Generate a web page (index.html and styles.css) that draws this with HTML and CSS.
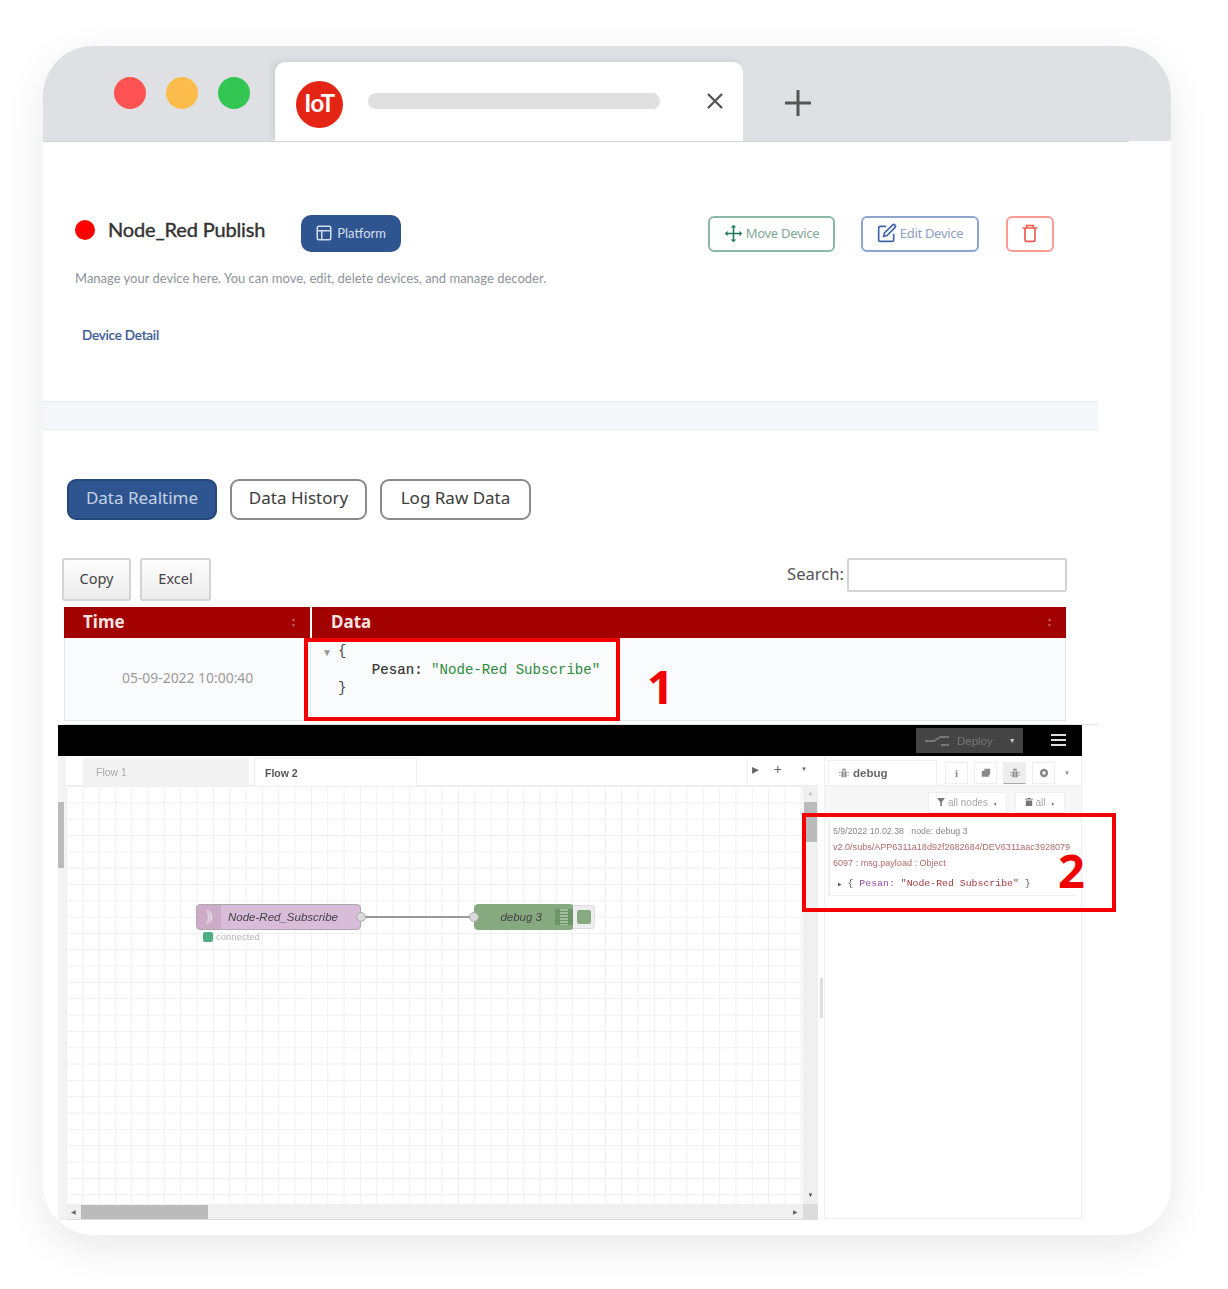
FILE: index.html
```html
<!DOCTYPE html>
<html lang="id">
<head>
  <meta charset="UTF-8" />
  <meta name="viewport" content="width=device-width, initial-scale=1.0"/>
  <title>Node_Red Publish</title>
  <link rel="stylesheet" href="styles.css">
</head>
<body>
  <div class="window">
    <div class="tabbar">
      <div class="dots">
        <span class="dot dot-red"></span>
        <span class="dot dot-yellow"></span>
        <span class="dot dot-green"></span>
      </div>
      <div class="tab">
        <div class="logo">IoT</div>
        <div class="address"></div>
        <svg class="tab-close" viewBox="0 0 16 16"><path d="M1 1l14 14M15 1L1 15"/></svg>
      </div>
      <svg class="tab-new" viewBox="0 0 26 26"><path d="M13 1v24M1 13h24"/></svg>
    </div>

    <div class="device-head">
      <span class="status-dot"></span>
      <h1>Node_Red Publish</h1>
      <button class="btn-platform">
        <svg viewBox="0 0 24 24"><rect x="3" y="3" width="18" height="18" rx="2"/><path d="M3 9h18M9 9v12"/></svg>
        Platform
      </button>
      <div class="head-actions">
        <button class="btn-line btn-move">
          <svg viewBox="0 0 24 24"><path d="M12 1l3.500 3.500H13V11h6.500V8.500L23 12l-3.500 3.500V13H13v6.500h2.500L12 23l-3.500-3.500H11V13H4.500v2.500L1 12l3.500-3.500V11H11V4.500H8.500z"/></svg>
          Move Device
        </button>
        <button class="btn-line btn-edit">
          <svg viewBox="0 0 24 24"><path d="M11 4H4a2 2 0 0 0-2 2v14a2 2 0 0 0 2 2h14a2 2 0 0 0 2-2v-7"/><path d="M18.500 2.500a2.121 2.121 0 0 1 3 3L12 15l-4 1 1-4z"/></svg>
          Edit Device
        </button>
        <button class="btn-line btn-trash">
          <svg viewBox="0 0 24 24"><path d="M3 6h18M8 6V3h8v3M6 6v14a2 2 0 0 0 2 2h8a2 2 0 0 0 2-2V6"/></svg>
        </button>
      </div>
    </div>
    <p class="device-sub">Manage your device here. You can move, edit, delete devices, and manage decoder.</p>
    <a class="device-link">Device Detail</a>
    <div class="strip"></div>

    <div class="data-tabs">
      <button class="data-tab active">Data Realtime</button>
      <button class="data-tab">Data History</button>
      <button class="data-tab">Log Raw Data</button>
    </div>

    <div class="table-tools">
      <button class="tool-btn tool-copy">Copy</button>
      <button class="tool-btn tool-excel">Excel</button>
      <label class="search">Search: <span class="search-input"></span></label>
    </div>

    <div class="table">
      <div class="th th-time">Time <span class="sort">&#9650;<br>&#9660;</span></div>
      <div class="th th-data">Data <span class="sort">&#9650;<br>&#9660;</span></div>
      <div class="td td-time">05-09-2022 10:00:40</div>
      <div class="td td-data">
        <span class="json-caret">&#9660;</span>
        <pre class="json">{
    <b>Pesan:</b> <i>"Node-Red Subscribe"</i>
}</pre>
      </div>
    </div>
    <div class="table-rule"></div>

    <div class="nodered">
      <div class="nr-top">
        <div class="nr-deploy">
          <svg viewBox="0 0 24 12"><path d="M0 6h9l6-4M15 2h9M16 10h8"/></svg>
          <span>Deploy</span>
          <span class="nr-deploy-caret">&#9660;</span>
        </div>
        <div class="nr-burger"><span></span><span></span><span></span></div>
      </div>
      <div class="nr-main">
        <div class="nr-left-scroll"><span></span></div>
        <div class="nr-work">
          <div class="nr-tabs">
            <span class="nr-tab">Flow 1</span>
            <span class="nr-tab nr-tab-on">Flow 2</span>
            <div class="nr-tab-tools">
              <span class="nr-tool">&#9656;</span>
              <span class="nr-tool">+</span>
              <span class="nr-tool nr-tool-small">&#9660;</span>
            </div>
          </div>
          <div class="nr-canvas-row">
            <div class="nr-canvas">
              <div class="wire"></div>
              <div class="node node-sub">
                <span class="node-icon">
                  <svg viewBox="0 0 12 22"><path d="M3 2c3 5 3 13 0 18M6 3c2 5 2 11 0 16M8.500 6c1 3 1 7 0 10"/></svg>
                </span>
                <span class="node-label">Node-Red_Subscribe</span>
                <span class="port port-out"></span>
              </div>
              <div class="node-status"><span></span>connected</div>
              <div class="node node-debug">
                <span class="port port-in"></span>
                <span class="node-label">debug 3</span>
                <span class="node-lines"></span>
              </div>
              <div class="node-toggle"><span></span></div>
            </div>
            <div class="nr-vscroll">
              <span class="up">&#9650;</span>
              <span class="thumb"></span>
              <span class="down">&#9660;</span>
            </div>
          </div>
          <div class="nr-hscroll">
            <span class="left">&#9664;</span>
            <span class="thumb"></span>
            <span class="right">&#9654;</span>
            <span class="corner"></span>
          </div>
        </div>
        <div class="nr-sep"><span></span></div>
        <div class="nr-side">
          <div class="side-tabs">
            <span class="side-tab">
              <svg viewBox="0 0 12 12"><path d="M4 1h4v2H4zM3 4h2.500v7H3zM6.500 4H9v7H6.500zM0 5h2v1H0zM10 5h2v1h-2zM0 8h2v1H0zM10 8h2v1h-2z"/></svg>
              debug
            </span>
            <span class="side-btn">i</span>
            <span class="side-btn"><svg viewBox="0 0 12 12"><path d="M4 1h7v7H9.500v2.500H1v-7h3z"/></svg></span>
            <span class="side-btn side-btn-on"><svg viewBox="0 0 12 12"><path d="M4 1h4v2H4zM3 4h2.500v7H3zM6.500 4H9v7H6.500zM0 5h2v1H0zM10 5h2v1h-2zM0 8h2v1H0zM10 8h2v1h-2z"/></svg></span>
            <span class="side-btn"><svg viewBox="0 0 12 12"><path fill-rule="evenodd" d="M6 1a5 5 0 1 0 0 10A5 5 0 0 0 6 1zm0 3a2 2 0 1 1 0 4 2 2 0 0 1 0-4z"/></svg></span>
            <span class="side-caret">&#9660;</span>
          </div>
          <div class="side-filter">
            <span class="filter-btn filter-nodes"><svg viewBox="0 0 10 10"><path d="M0 0h10L6 5v5H4V5z"/></svg> all nodes <small>&#9660;</small></span>
            <span class="filter-btn filter-all"><svg viewBox="0 0 10 10"><path d="M3 0h4v1h3v1H0V1h3zM1 3h8v7H1z"/></svg> all <small>&#9660;</small></span>
          </div>
          <div class="debug-msg">
            <div class="debug-meta">5/9/2022 10.02.38 &nbsp; node: debug 3</div>
            <div class="debug-topic">v2.0/subs/APP6311a18d92f2682684/DEV6311aac3928079<br>6097 : msg.payload : Object</div>
            <div class="debug-json"><small>&#9654;</small> { <b>Pesan:</b> <i>"Node-Red Subscribe"</i> }</div>
          </div>
        </div>
      </div>
    </div>

    <div class="mark mark-one"></div>
    <div class="mark-num mark-num-one">1</div>
    <div class="mark mark-two"></div>
    <div class="mark-num mark-num-two">2</div>
  </div>
</body>
</html>
```

FILE: styles.css
```css
* {
  box-sizing: border-box;
}

body {
  margin: 0;
  background-color: #fff;
  font-family: 'Lato', sans-serif;
  color: #333;
}

button {
  font-family: inherit;
  padding: 0;
  cursor: pointer;
}

/* window + browser chrome */
.window {
  position: relative;
  width: 1128px;
  height: 1189px;
  margin: 46px 0 54px 43px;
  background-color: #fff;
  border-radius: 50px;
  box-shadow: 0 12px 40px rgba(0,0,0,0.09);
  overflow: hidden;
}

.tabbar {
  display: flex;
  height: 95px;
  background-color: #dee0e4;
  position: relative;
}

.tabbar::after {
  content: '';
  position: absolute;
  left: 0;
  right: 42px;
  bottom: -1px;
  height: 1px;
  background-color: #d2d4d7;
  z-index: 2;
}

.dots {
  display: flex;
  gap: 20px;
  padding: 31px 0 0 71px;
}

.dot {
  width: 32px;
  height: 32px;
  border-radius: 50%;
}

.dot-red { background-color: #ff5252; }
.dot-yellow { background-color: #fbbc4b; }
.dot-green { background-color: #33c653; }

.tab {
  display: flex;
  align-items: flex-start;
  width: 468px;
  height: 79px;
  margin: 16px 0 0 25px;
  background-color: #fff;
  border-radius: 10px 10px 0 0;
  box-shadow: -3px -2px 6px rgba(0,0,0,0.07);
  position: relative;
  z-index: 1;
}

.logo {
  width: 47px;
  height: 47px;
  margin: 19px 0 0 21px;
  border-radius: 50%;
  background-color: #e42515;
  color: #fff;
  font-size: 24px;
  font-weight: 700;
  letter-spacing: -0.5px;
  line-height: 43px;
  text-align: center;
}

.address {
  width: 292px;
  height: 16px;
  margin: 31px 0 0 25px;
  background-color: #e0e0e0;
  border-radius: 8px;
}

.tab-close {
  width: 16px;
  height: 16px;
  margin: 31px 0 0 47px;
  fill: none;
  stroke: #555;
  stroke-width: 2.400;
}

.tab-new {
  width: 26px;
  height: 26px;
  margin: 44px 0 0 42px;
  fill: none;
  stroke: #555;
  stroke-width: 3;
  stroke-linecap: round;
}

/* device header */
.device-head {
  display: flex;
  align-items: flex-start;
  padding: 74px 117px 0 32px;
}

.status-dot {
  width: 20px;
  height: 20px;
  margin-top: 5px;
  border-radius: 50%;
  background-color: #f00;
}

h1 {
  margin: -1px 0 0 13px;
  font-size: 20px;
  font-weight: 400;
  line-height: 30px;
  letter-spacing: -0.15px;
  -webkit-text-stroke: 0.4px #333;
  color: #333;
}

.btn-platform {
  display: flex;
  align-items: center;
  gap: 4px;
  width: 100px;
  height: 37px;
  margin-left: 36px;
  padding: 0 0 2px 14px;
  background-color: #2f5591;
  border: none;
  border-radius: 10px;
  color: #d5deec;
  font-size: 13px;
}

.btn-platform svg {
  width: 18px;
  height: 18px;
  fill: none;
  stroke: #d5deec;
  stroke-width: 2;
}

.head-actions {
  display: flex;
  gap: 26px;
  margin-left: auto;
}

.btn-line {
  display: flex;
  align-items: center;
  justify-content: center;
  gap: 3px;
  height: 36px;
  margin-top: 1px;
  padding-bottom: 2px;
  background-color: #fff;
  border: 2px solid;
  border-radius: 6px;
  font-family: 'Noto Sans', sans-serif;
  font-size: 13px;
  letter-spacing: -0.3px;
}

.btn-line svg {
  fill: none;
  stroke-width: 2;
}

.btn-move {
  width: 127px;
  border-color: #8bb8a5;
  color: #7fa896;
}

.btn-move svg {
  width: 19px;
  height: 19px;
  fill: #1f7a5a;
  stroke: none;
}

.btn-edit {
  width: 118px;
  border-color: #8ea6cf;
  color: #8ea0c2;
}

.btn-edit svg {
  width: 20px;
  height: 20px;
  stroke: #3f66a8;
}

.btn-trash {
  width: 48px;
  margin-left: 1px;
  border-color: #fb9c94;
}

.btn-trash svg {
  width: 20px;
  height: 20px;
  stroke: #ef5a50;
}

.device-sub {
  margin: 18px 0 0 32px;
  font-size: 13px;
  line-height: 16px;
  color: #8e939b;
}

.device-link {
  display: block;
  margin: 41px 0 0 39px;
  font-size: 13.500px;
  font-weight: 500;
  line-height: 16px;
  letter-spacing: -0.22px;
  -webkit-text-stroke: 0.2px #3d5b96;
  color: #3d5b96;
}

.strip {
  width: 1055px;
  height: 29px;
  margin-top: 58px;
  background-color: #f5f7fa;
  border-top: 1px solid #e9ebef;
  border-bottom: 1px solid #e9ebef;
}

/* realtime / history tabs */
.data-tabs {
  display: flex;
  gap: 13px;
  margin-top: 49px;
  padding-left: 24px;
}

.data-tab {
  width: 137px;
  height: 41px;
  padding-bottom: 4px;
  background-color: #fff;
  border: 2px solid #8a8a8a;
  border-radius: 9px;
  font-family: 'Noto Sans', sans-serif;
  font-size: 17px;
  color: #3b3b3b;
}

.data-tab:last-child {
  width: 151px;
}

.data-tab.active {
  width: 150px;
  background-color: #2f5591;
  border-color: #27477a;
  color: #c5d2e6;
}

/* copy / excel / search */
.table-tools {
  display: flex;
  align-items: flex-start;
  gap: 9px;
  margin-top: 38px;
  padding-left: 19px;
  width: 1024px;
}

.tool-btn {
  height: 43px;
  padding-bottom: 4px;
  background: linear-gradient(to bottom, #fdfdfd, #ececec);
  border: 2px solid #d4d4d4;
  border-radius: 3px;
  font-family: 'Noto Sans', sans-serif;
  font-size: 14.500px;
  color: #444;
}

.tool-copy { width: 69px; }
.tool-excel { width: 71px; }

.search {
  display: flex;
  gap: 3px;
  margin-left: auto;
  font-family: 'Noto Sans', sans-serif;
  font-size: 16.600px;
  line-height: 32px;
  color: #555;
}

.search-input {
  width: 220px;
  height: 34px;
  background-color: #fff;
  border: 2px solid #d4d4d4;
  border-radius: 2px;
}

/* data table */
.table {
  display: grid;
  grid-template-columns: 246px 756px;
  grid-template-rows: 31px 83px;
  width: 1002px;
  margin: 6px 0 0 21px;
}

.th {
  display: flex;
  align-items: center;
  justify-content: space-between;
  padding: 0 14px 2px 19px;
  background-color: #a30000;
  color: #f3e3e3;
  font-family: 'Noto Sans', sans-serif;
  font-size: 17px;
  font-weight: 700;
}

.th-data {
  border-left: 2px solid #fff;
}

.sort {
  font-size: 5px;
  line-height: 6px;
  color: #c26a6a;
}

.td {
  background-color: #fafbfc;
  border-bottom: 1px solid #e3e7ef;
}

.td-time {
  padding: 30px 0 0 57px;
  border-left: 1px solid #e3e7ef;
  font-family: 'Noto Sans', sans-serif;
  font-size: 13.900px;
  color: #9a9a9a;
}

.td-data {
  position: relative;
  padding: 4px 0 0 27px;
  border-left: 1px solid #e3e7ef;
  border-right: 1px solid #e3e7ef;
}

.json-caret {
  position: absolute;
  left: 11px;
  top: 8px;
  font-size: 10px;
  color: #999;
}

.json {
  margin: 0;
  font-family: 'Liberation Mono', monospace;
  font-size: 14.100px;
  line-height: 18.500px;
  color: #444;
}

.json b {
  font-weight: 400;
  color: #333;
  -webkit-text-stroke: 0.2px #333;
}

.json i {
  font-style: normal;
  color: #2e8b3d;
}

.table-rule {
  width: 1034px;
  height: 1px;
  margin: 3px 0 0 21px;
  background-color: #e4e4e4;
}

/* node-red screenshot */
.nodered {
  display: flex;
  flex-direction: column;
  width: 1024px;
  height: 495px;
  margin-left: 15px;
  font-family: 'Liberation Sans', sans-serif;
  filter: blur(0.4px);
}

.nr-top {
  display: flex;
  justify-content: flex-end;
  align-items: center;
  gap: 28px;
  height: 31px;
  padding-right: 16px;
  background-color: #000;
}

.nr-deploy {
  display: flex;
  align-items: center;
  width: 107px;
  height: 25px;
  padding-left: 9px;
  background-color: #444;
  color: #777;
  font-size: 11.500px;
}

.nr-deploy svg {
  width: 24px;
  height: 12px;
  margin-right: 8px;
  fill: none;
  stroke: #777;
  stroke-width: 2;
}

.nr-deploy-caret {
  margin-left: 16px;
  font-size: 7px;
  color: #ccc;
}

.nr-burger {
  display: flex;
  flex-direction: column;
  gap: 3px;
  width: 15px;
  margin-bottom: 2px;
}

.nr-burger span {
  height: 2px;
  background-color: #ddd;
}

.nr-main {
  display: flex;
  flex: 1;
  min-height: 0;
}

.nr-left-scroll {
  width: 8px;
  padding-top: 46px;
  background-color: #f3f3f3;
}

.nr-left-scroll span {
  display: block;
  width: 6px;
  height: 66px;
  background-color: #bbb;
}

.nr-work {
  display: flex;
  flex-direction: column;
  width: 752px;
}

.nr-tabs {
  display: flex;
  gap: 5px;
  height: 30px;
  padding: 2px 0 0 17px;
  background-color: #fff;
  border-bottom: 1px solid #eee;
}

.nr-tab {
  width: 166px;
  height: 28px;
  padding: 8px 0 0 13px;
  background-color: #f3f3f3;
  font-size: 10.500px;
  color: #aaa;
}

.nr-tab-on {
  width: 163px;
  padding-left: 10px;
  background-color: #fff;
  border: 1px solid #eee;
  border-bottom: none;
  color: #555;
  font-weight: 700;
}

.nr-tab-tools {
  display: flex;
  gap: 15px;
  align-items: center;
  height: 28px;
  margin-left: auto;
  padding: 0 11px 6px 4px;
  border-left: 1px solid #eee;
  color: #666;
  font-size: 14px;
}

.nr-tool-small {
  margin-left: 4px;
  font-size: 6px;
}

.nr-canvas-row {
  display: flex;
  flex: 1;
  min-height: 0;
}

.nr-canvas {
  position: relative;
  flex: 1;
  background-color: #fff;
  background-image:
    linear-gradient(to right, #efefef 1px, transparent 1px),
    linear-gradient(to bottom, #efefef 1px, transparent 1px);
  background-size: 16.330px 16.330px;
  background-position: 0 0;
}

.wire {
  position: absolute;
  left: 295px;
  top: 130px;
  width: 114px;
  height: 2px;
  background-color: #999;
}

.node {
  position: absolute;
  top: 118px;
  display: flex;
  align-items: center;
  height: 26px;
  border: 1px solid #aaa;
  border-radius: 4px;
  font-size: 11.500px;
  font-style: italic;
  color: #444;
}

.node-sub {
  left: 130px;
  width: 165px;
  background-color: #d9bcd9;
}

.node-icon {
  display: flex;
  align-items: center;
  justify-content: center;
  width: 24px;
  height: 100%;
  background-color: #cdacc9;
  border-radius: 3px 0 0 3px;
}

.node-icon svg {
  width: 10px;
  height: 20px;
  fill: none;
  stroke: #f3e8f1;
  stroke-width: 1;
}

.node-sub .node-label {
  margin-left: 7px;
}

.node-debug {
  left: 408px;
  width: 100px;
  justify-content: flex-end;
  background-color: #87a980;
  border-color: #87a980;
}

.node-lines {
  width: 18px;
  height: 100%;
  margin-left: 13px;
  background-color: #6e9568;
  background-image: linear-gradient(to bottom, #d6e3d2 1.500px, transparent 1.500px);
  background-size: 8px 3px;
  background-position: center;
  background-repeat: repeat-y;
  background-clip: content-box;
  padding: 4px 0;
}

.port {
  position: absolute;
  top: 7px;
  width: 10px;
  height: 10px;
  background-color: #d9d9d9;
  border: 1px solid #aaa;
  border-radius: 50%;
}

.port-out { right: -6px; }
.port-in { left: -6px; }

.node-toggle {
  position: absolute;
  left: 507px;
  top: 119px;
  width: 22px;
  height: 24px;
  padding: 4px;
  background-color: #eee;
  border: 1px solid #ddd;
  border-left: none;
  border-radius: 0 4px 4px 0;
}

.node-toggle span {
  display: block;
  width: 14px;
  height: 14px;
  background-color: #87a980;
  border-radius: 2px;
}

.node-status {
  position: absolute;
  left: 137px;
  top: 145px;
  display: flex;
  align-items: center;
  gap: 3px;
  font-size: 9.500px;
  color: #b5b5b5;
}

.node-status span {
  width: 10px;
  height: 10px;
  background-color: #4caf85;
  border-radius: 2px;
}

.nr-vscroll {
  display: flex;
  flex-direction: column;
  align-items: center;
  width: 15px;
  background-color: #f0f0f0;
  font-size: 6px;
  color: #555;
}

.nr-vscroll .up {
  height: 16px;
  line-height: 14px;
  color: #bbb;
}

.nr-vscroll .thumb {
  width: 13px;
  height: 40px;
  background-color: #bbb;
}

.nr-vscroll .down {
  margin-top: auto;
  height: 14px;
  line-height: 10px;
}

.nr-hscroll {
  display: flex;
  align-items: center;
  height: 16px;
  background-color: #f0f0f0;
  border-bottom: 1px solid #ddd;
  font-size: 6px;
  color: #666;
}

.nr-hscroll .left {
  width: 15px;
  text-align: center;
}

.nr-hscroll .thumb {
  width: 127px;
  height: 14px;
  background-color: #bbb;
}

.nr-hscroll .right {
  margin-left: auto;
  width: 15px;
  text-align: center;
}

.nr-hscroll .corner {
  width: 15px;
  height: 100%;
  background-color: #dcdcdc;
}

.nr-sep {
  display: flex;
  align-items: center;
  justify-content: center;
  width: 6px;
  background-color: #fff;
}

.nr-sep span {
  width: 3px;
  height: 40px;
  margin-top: 20px;
  background-color: #ddd;
}

.nr-side {
  flex: 1;
  background-color: #fff;
  border: 1px solid #eee;
  border-top: none;
  height: 463px;
}

.side-tabs {
  display: flex;
  align-items: center;
  gap: 6px;
  height: 30px;
  padding: 4px 0 0 3px;
  border-bottom: 1px solid #eee;
}

.side-tab {
  display: flex;
  align-items: center;
  gap: 4px;
  width: 109px;
  height: 26px;
  padding-left: 10px;
  margin-right: 2px;
  border: 1px solid #eee;
  border-bottom: none;
  font-size: 11.500px;
  font-weight: 700;
  color: #666;
}

.side-tab svg,
.side-btn svg {
  width: 10px;
  height: 10px;
  fill: #888;
}

.side-btn {
  display: flex;
  align-items: center;
  justify-content: center;
  width: 23px;
  height: 22px;
  border: 1px solid #eee;
  font-family: 'Liberation Serif', serif;
  font-size: 11px;
  font-weight: 700;
  color: #888;
}

.side-btn-on {
  background-color: #eee;
  border-bottom: 1px solid #aaa;
}

.side-caret {
  margin-left: 3px;
  font-size: 6px;
  color: #888;
}

.side-filter {
  display: flex;
  justify-content: flex-end;
  gap: 8px;
  height: 35px;
  padding: 6px 16px 0 0;
  background-color: #f7f7f7;
}

.filter-btn {
  height: 21px;
  padding-top: 4px;
  background-color: #fff;
  border: 1px solid #eee;
  text-align: center;
  font-size: 10px;
  color: #aaa;
  white-space: nowrap;
}

.filter-btn svg {
  width: 8px;
  height: 8px;
  fill: #777;
}

.filter-btn small {
  font-size: 5px;
  color: #777;
  margin-left: 2px;
}

.filter-nodes { width: 79px; }
.filter-all { width: 50px; }

.debug-msg {
  height: 75px;
  margin-left: 3px;
  margin-right: 6px;
  padding: 2px 0 0 3px;
  background-color: #fff;
  border-left: 2px solid #eee;
  border-bottom: 1px solid #eee;
  font-size: 8.800px;
  line-height: 16px;
  color: #888;
  white-space: nowrap;
}

.debug-topic {
  color: #b06a6a;
  font-size: 9.050px;
}

.debug-json {
  margin-top: 5px;
  padding-left: 5px;
  font-family: 'Liberation Mono', monospace;
  font-size: 9.850px;
  color: #555;
}

.debug-json small {
  font-size: 6px;
}

.debug-json b {
  font-weight: 400;
  color: #8a4aa0;
}

.debug-json i {
  font-style: normal;
  color: #a33a3a;
}

/* red annotations over the page */
.mark {
  position: absolute;
  border: 4px solid #f40000;
}

.mark-one {
  left: 261px;
  top: 592px;
  width: 316px;
  height: 83px;
}

.mark-two {
  left: 759px;
  top: 767px;
  width: 314px;
  height: 99px;
}

.mark-num {
  position: absolute;
  font-family: 'Noto Sans', sans-serif;
  font-weight: 700;
  font-size: 47px;
  line-height: 46px;
  color: #f00000;
}

.mark-num-one {
  left: 604px;
  top: 617px;
}

.mark-num-two {
  left: 1015px;
  top: 801px;
}
```
